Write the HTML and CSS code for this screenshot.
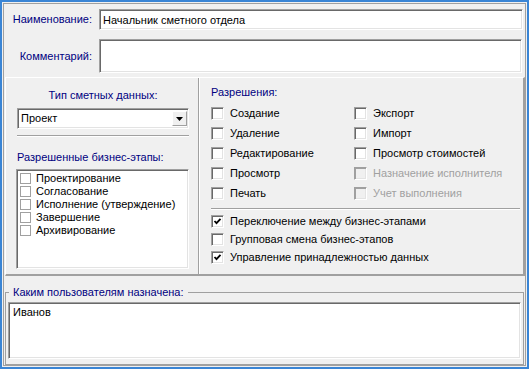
FILE: index.html
```html
<!DOCTYPE html>
<html lang="ru">
<head>
    <meta charset="UTF-8">
    <title>Роль</title>
    <link rel="stylesheet" href="styles.css">
</head>
<body>
    <div class="window">
        <div class="frame">
            <!-- Наименование / комментарий -->
            <div class="fields">
                <div class="lbl">Наименование:</div>
                <div class="edit name">Начальник сметного отдела</div>
                <div class="lbl">Комментарий:</div>
                <div class="edit memo"></div>
            </div>

            <div class="panel">
                <!-- Левая часть -->
                <div class="left">
                    <div class="caption center">Тип сметных данных:</div>
                    <div class="edit combo">
                        <span>Проект</span>
                        <span class="drop">
                            <svg width="7" height="4" viewBox="0 0 7 4"><path d="M0 0h7L3.5 4z" fill="#000"/></svg>
                        </span>
                    </div>
                    <div class="sep"></div>
                    <div class="caption">Разрешенные бизнес-этапы:</div>
                    <div class="edit listbox">
                        <div class="li"><span class="flatbox"></span>Проектирование</div>
                        <div class="li"><span class="flatbox"></span>Согласование</div>
                        <div class="li"><span class="flatbox"></span>Исполнение (утверждение)</div>
                        <div class="li"><span class="flatbox"></span>Завершение</div>
                        <div class="li"><span class="flatbox"></span>Архивирование</div>
                    </div>
                </div>

                <!-- Правая часть -->
                <div class="right">
                    <div class="caption">Разрешения:</div>
                    <div class="perms">
                        <div class="chk"><span class="box"></span>Создание</div>
                        <div class="chk"><span class="box"></span>Экспорт</div>
                        <div class="chk"><span class="box"></span>Удаление</div>
                        <div class="chk"><span class="box"></span>Импорт</div>
                        <div class="chk"><span class="box"></span>Редактирование</div>
                        <div class="chk"><span class="box"></span>Просмотр стоимостей</div>
                        <div class="chk"><span class="box"></span>Просмотр</div>
                        <div class="chk disabled"><span class="box"></span>Назначение исполнителя</div>
                        <div class="chk"><span class="box"></span>Печать</div>
                        <div class="chk disabled"><span class="box"></span>Учет выполнения</div>
                    </div>
                    <div class="sep"></div>
                    <div class="opts">
                        <div class="chk"><span class="box"><svg width="9" height="9" viewBox="0 0 9 9"><path d="M1.5 4l2 2.2L7.5 1.8" fill="none" stroke="#000" stroke-width="1.8"/></svg></span>Переключение между бизнес-этапами</div>
                        <div class="chk"><span class="box"></span>Групповая смена бизнес-этапов</div>
                        <div class="chk"><span class="box"><svg width="9" height="9" viewBox="0 0 9 9"><path d="M1.5 4l2 2.2L7.5 1.8" fill="none" stroke="#000" stroke-width="1.8"/></svg></span>Управление принадлежностью данных</div>
                    </div>
                </div>
            </div>

            <!-- Пользователи -->
            <fieldset class="group">
                <legend>Каким пользователям назначена:</legend>
                <div class="edit users">Иванов</div>
            </fieldset>
        </div>
    </div>
</body>
</html>
```

FILE: styles.css
```css
* {
    box-sizing: border-box;
}

body {
    margin: 0;
    font-family: "Liberation Sans", Arial, sans-serif;
    font-size: 11px;
    line-height: 13px;
    color: #000;
    background: #fff;
}

.window {
    width: 529px;
    height: 369px;
    border: 2px solid #3a85d5;
    padding: 1px;
    background: #f0f0f0;
}

.frame {
    height: 100%;
    border: 1px solid #a0a0a0;
    display: flex;
    flex-direction: column;
}

/* Поля ввода */
.fields {
    display: grid;
    grid-template-columns: 88px 1fr;
    column-gap: 7px;
    row-gap: 9px;
    align-items: center;
    padding: 5px 2px 0 0;
}
.lbl {
    text-align: right;
    color: #000080;
}
.edit {
    background: #fff;
    border: 1px solid;
    border-color: #a0a0a0 #fff #fff #a0a0a0;
    box-shadow: inset 1px 1px 0 #696969, inset -1px -1px 0 #e3e3e3;
}
.name {
    height: 21px;
    padding: 4px 3px;
}
.memo {
    height: 34px;
    margin-right: 1px;
}

/* Средняя панель */
.panel {
    height: 199px;
    margin: 4px 0 0 1px;
    display: flex;
    border-top: 1px solid #fff;
    border-left: 1px solid #fff;
    border-right: 2px solid #a0a0a0;
    border-bottom: 2px solid #a0a0a0;
}
.left {
    width: 193px;
    padding: 11px 9px 0 11px;
    border-right: 1px solid #a0a0a0;
}
.right {
    flex: 1;
    padding: 8px 3px 0 11px;
    border-left: 1px solid #fff;
}

.caption {
    color: #000080;
}
.center {
    text-align: center;
}

.combo {
    height: 21px;
    margin-top: 6px;
    display: flex;
    align-items: center;
    justify-content: space-between;
    padding: 0 1px 0 3px;
}
.drop {
    width: 15px;
    height: 15px;
    display: flex;
    align-items: center;
    justify-content: center;
    background: #f0f0f0;
    border: 1px solid;
    border-color: #fff #a0a0a0 #a0a0a0 #fff;
}

.sep {
    height: 2px;
    border-top: 1px solid #a0a0a0;
    border-bottom: 1px solid #fff;
}
.left .sep {
    margin: 6px 0 14px 0;
}
.right .sep {
    margin: 5px 0 2px 0;
}

.listbox {
    height: 100px;
    margin-top: 5px;
    margin-left: -1px;
    padding: 2px 3px;
}
.li {
    display: flex;
    align-items: center;
    height: 13px;
}
.flatbox {
    width: 11px;
    height: 11px;
    margin-right: 5px;
    border: 1px solid #a0a0a0;
    background: #fff;
}

/* Флажки */
.perms {
    display: grid;
    grid-template-columns: 143px 1fr;
    margin-top: 4px;
}
.chk {
    display: flex;
    align-items: center;
    height: 20px;
}
.opts .chk {
    height: 18px;
}
.box {
    width: 13px;
    height: 13px;
    margin-right: 6px;
    display: flex;
    align-items: center;
    justify-content: center;
    background: #fff;
    border: 1px solid;
    border-color: #a0a0a0 #fff #fff #a0a0a0;
    box-shadow: inset 1px 1px 0 #696969, inset -1px -1px 0 #e3e3e3;
}
.chk.disabled {
    color: #a0a0a0;
}
.chk.disabled .box {
    background: #f0f0f0;
    box-shadow: inset 1px 1px 0 #a0a0a0, inset -1px -1px 0 #e3e3e3;
}

/* Группа пользователей */
.group {
    margin: 10px 1px 0 1px;
    padding: 3px 2px 4px 2px;
    border: 1px solid #a0a0a0;
    min-width: 0;
    flex: 1;
}
.group legend {
    color: #000080;
    padding: 0 4px;
    margin-left: 1px;
}
.users {
    height: 57px;
    padding: 3px 4px;
}
```
